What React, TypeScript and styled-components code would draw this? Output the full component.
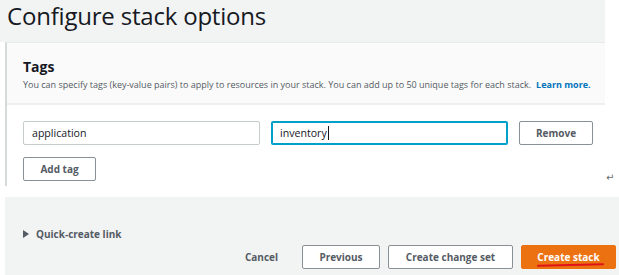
import React from 'react'
import styled, { createGlobalStyle } from 'styled-components'

const GlobalStyle = createGlobalStyle`
  body {
    margin: 0;
    background: #ffffff;
    font-family: "Open Sans", "Noto Sans", sans-serif;
    color: #16191f;
  }
`

const Page = styled.div`
  width: 619px;
  height: 275px;
  overflow: hidden;
  display: flex;
  flex-direction: column;
`

const TitleBand = styled.div`
  width: 605px;
  height: 42px;
  background: #f2f3f3;
  display: flex;
  align-items: flex-start;
  padding-left: 7px;
  box-sizing: border-box;
`

const Title = styled.h1`
  margin: 0;
  font-size: 24px;
  font-weight: 400;
  line-height: 32px;
  letter-spacing: -0.2px;
  color: #16191f;
`

const Section = styled.div`
  display: flex;
  align-items: flex-end;
`

const Panel = styled.div`
  margin-left: 5px;
  width: 600px;
  border-left: 2px solid #d5dbdb;
  border-top: 1px solid #e6eaea;
  box-sizing: border-box;
`

const PanelHeader = styled.div`
  height: 62px;
  background: #fafafa;
  border-bottom: 2px solid #eef0f0;
  box-sizing: border-box;
  padding: 14px 0 0 16px;
`

const PanelTitle = styled.h2`
  margin: 0;
  font-size: 14px;
  font-weight: 700;
  line-height: 20px;
`

const Description = styled.p`
  margin: 0;
  font-size: 9px;
  line-height: 16px;
  color: #545b64;
  white-space: nowrap;
`

const LearnMore = styled.a`
  color: #0073bb;
  font-weight: 700;
  text-decoration: none;
  margin-left: 5px;
`

const PanelBody = styled.div`
  background: #ffffff;
  padding: 16px 0 5px 16px;
  display: flex;
  flex-direction: column;
  gap: 12px;
`

const TagRow = styled.div`
  display: flex;
  align-items: center;
`

const Field = styled.div<{ $focused?: boolean }>`
  width: 237px;
  height: 24px;
  box-sizing: border-box;
  border: ${p => (p.$focused ? '2px solid #00a1c9' : '1px solid #c6cbcb')};
  border-radius: 2px;
  padding-left: ${p => (p.$focused ? '7px' : '8px')};
  display: flex;
  align-items: center;
  font-size: 10.6px;
  color: #16191f;
  margin-right: 11px;
`

const Caret = styled.span`
  display: inline-block;
  width: 1px;
  height: 14px;
  background: #16191f;
  margin-left: 1px;
`

const Button = styled.button<{ $width: number }>`
  width: ${p => p.$width}px;
  height: 24px;
  box-sizing: border-box;
  border: 1px solid #879196;
  border-radius: 2px;
  background: #ffffff;
  color: #545b64;
  font-family: inherit;
  font-size: 10px;
  font-weight: 700;
  padding: 0;
  cursor: pointer;
`

const PrimaryButton = styled(Button)`
  background: #ec7211;
  border-color: #ec7211;
  color: #ffffff;
`

const Underlined = styled.span`
  position: relative;
  &::after {
    content: '';
    position: absolute;
    left: 0;
    right: -5px;
    bottom: -2px;
    height: 2px;
    background: #e0131b;
    border-radius: 1px;
    transform: rotate(-1.5deg);
  }
`

const LinkButton = styled.button`
  border: none;
  background: none;
  color: #545b64;
  font-family: inherit;
  font-size: 10px;
  font-weight: 700;
  padding: 0;
  margin-right: 16px;
`

const ReturnMark = styled.span`
  font-size: 10px;
  color: #6b6b6b;
  margin: 0 0 2px 1px;
  line-height: 12px;
  font-family: "DejaVu Sans", sans-serif;
`

const Footer = styled.div`
  margin-top: 11px;
  margin-left: 5px;
  flex: 1;
  background: #f2f3f3;
  display: flex;
  flex-direction: column;
  padding: 30px 3px 0 18px;
  box-sizing: border-box;
`

const Expander = styled.div`
  display: flex;
  align-items: center;
  gap: 7px;
  font-size: 10px;
  font-weight: 700;
  color: #545b64;
`

const Triangle = styled.span`
  width: 0;
  height: 0;
  border-top: 4px solid transparent;
  border-bottom: 4px solid transparent;
  border-left: 6px solid #545b64;
`

const Actions = styled.div`
  margin-top: 4px;
  display: flex;
  justify-content: flex-end;
  align-items: center;
  gap: 8px;
`

export default function App() {
  return (
    <Page>
      <GlobalStyle />
      <TitleBand>
        <Title>Configure stack options</Title>
      </TitleBand>
      <Section>
        <Panel>
          <PanelHeader>
            <PanelTitle>Tags</PanelTitle>
            <Description>
              You can specify tags (key-value pairs) to apply to resources in your stack. You can add up to 50 unique tags for each stack.
              <LearnMore href="#">Learn more.</LearnMore>
            </Description>
          </PanelHeader>
          <PanelBody>
            <TagRow>
              <Field>application</Field>
              <Field $focused>
                inventory
                <Caret />
              </Field>
              <Button $width={74}>Remove</Button>
            </TagRow>
            <TagRow>
              <Button $width={73}>Add tag</Button>
            </TagRow>
          </PanelBody>
        </Panel>
        <ReturnMark>↵</ReturnMark>
      </Section>
      <Footer>
        <Expander>
          <Triangle />
          Quick-create link
        </Expander>
        <Actions>
          <LinkButton>Cancel</LinkButton>
          <Button $width={78}>Previous</Button>
          <Button $width={125}>Create change set</Button>
          <PrimaryButton $width={95}>
            <Underlined>Create stack</Underlined>
          </PrimaryButton>
        </Actions>
      </Footer>
    </Page>
  )
}
